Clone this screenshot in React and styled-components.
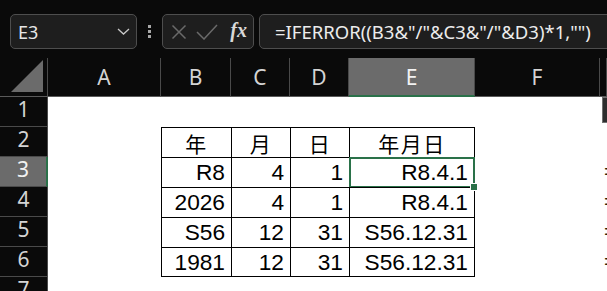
import React from "react";
import styled, { createGlobalStyle } from "styled-components";

const GREEN = "#2a7149";

const Global = createGlobalStyle`
  html, body { margin: 0; padding: 0; background: #0a0a0a; }
  body { font-family: "Noto Sans", "Liberation Sans", sans-serif; }
`;

const cols = ["A", "B", "C", "D", "E", "F", ""];

// table B2:E6, column G shows the clipped "=" of its formulas
const data = {
  2: ["年", "月", "日", "年月日"],
  3: ["R8", "4", "1", "R8.4.1"],
  4: ["2026", "4", "1", "R8.4.1"],
  5: ["S56", "12", "31", "S56.12.31"],
  6: ["1981", "12", "31", "S56.12.31"],
};

function App() {
  const rows = [1, 2, 3, 4, 5, 6, 7];
  return (
    <Screen>
      <Global />
      <Toolbar>
        <NameBox>
          <span>E3</span>
          <svg width="13" height="7" viewBox="0 0 13 7">
            <polyline points="1,1 6.5,6 12,1" fill="none" stroke="#c8c8c8" strokeWidth="1.3" />
          </svg>
        </NameBox>
        <Grip>
          <i />
          <i />
          <i />
        </Grip>
        <FxBox>
          <svg width="16" height="16" viewBox="0 0 16 16">
            <path d="M1.5 1.5 L14.5 14.5 M14.5 1.5 L1.5 14.5" stroke="#6a6a6a" strokeWidth="1.5" />
          </svg>
          <svg width="22" height="16" viewBox="0 0 22 16">
            <polyline points="1,8 8,15 21,1" fill="none" stroke="#6a6a6a" strokeWidth="1.5" />
          </svg>
          <Fx>fx</Fx>
        </FxBox>
        <FormulaBox>=IFERROR((B3&amp;"/"&amp;C3&amp;"/"&amp;D3)*1,"")</FormulaBox>
      </Toolbar>

      <Sheet>
        <Corner>
          <svg width="33" height="33" viewBox="0 0 33 33">
            <polygon points="0,32 32,0 32,32" fill="#6b6b6b" />
          </svg>
        </Corner>
        {cols.map((c, i) => (
          <ColHead key={"h" + i} $active={c === "E"}>
            {c}
          </ColHead>
        ))}
        {rows.map((r) => (
          <React.Fragment key={r}>
            <RowHead $active={r === 3}>{r}</RowHead>
            <Cell />
            {[0, 1, 2, 3].map((ci) => {
              const v = data[r] ? data[r][ci] : null;
              if (!v) return <Cell key={ci} />;
              return (
                <Cell
                  key={ci}
                  $boxed
                  $head={r === 2}
                  $last={ci === 3}
                  $bottom={r === 6}
                  $selected={r === 3 && ci === 3}
                >
                  {v}
                </Cell>
              );
            })}
            <Cell />
            <Edge>
              {r === 1 && (
                <FloatBtn>
                  <svg width="8" height="8" viewBox="0 0 8 8">
                    <path d="M1 3 L4 1 L7 3 L6 7 L2 7 Z" fill="#c9a23a" />
                  </svg>
                </FloatBtn>
              )}
              {r >= 3 && r <= 6 ? "=" : ""}
            </Edge>
          </React.Fragment>
        ))}
      </Sheet>
    </Screen>
  );
}

const Screen = styled.div`
  width: 607px;
  height: 291px;
  overflow: hidden;
  background: #0a0a0a;
`;

const Toolbar = styled.div`
  height: 58px;
  box-sizing: border-box;
  padding: 14px 0 0 10px;
  display: flex;
  align-items: flex-start;
`;

const BoxBase = styled.div`
  height: 35px;
  box-sizing: border-box;
  border: 1px solid #4e4e4e;
  border-radius: 5px;
  background: #1e1e1e;
  display: flex;
  align-items: center;
`;

const NameBox = styled(BoxBase)`
  width: 127px;
  padding: 0 6px 0 7px;
  justify-content: space-between;
  color: #e6e6e6;
  font-size: 18px;
  span {
    margin-top: 1px;
  }
`;

const Grip = styled.div`
  width: 25px;
  height: 35px;
  display: flex;
  flex-direction: column;
  align-items: center;
  justify-content: center;
  gap: 2px;
  i {
    width: 3px;
    height: 3px;
    background: #a8a8a8;
  }
`;

const FxBox = styled(BoxBase)`
  width: 92px;
  padding: 0 6px 0 8px;
  justify-content: space-between;
  svg:nth-child(2) {
    margin-left: -4px;
  }
`;

const Fx = styled.span`
  font-family: "Liberation Serif", serif;
  font-style: italic;
  font-weight: bold;
  font-size: 20px;
  color: #d8d8d8;
  margin-top: -2px;
`;

const FormulaBox = styled(BoxBase)`
  flex: 1;
  margin-left: 5px;
  margin-right: -12px;
  padding-left: 15px;
  color: #ececec;
  font-size: 18.5px;
  white-space: nowrap;
`;

const Sheet = styled.div`
  display: grid;
  grid-template-columns: 48px 113px 70px 59px 59px 126px 125px 7px;
  grid-template-rows: 39px repeat(7, 30px);
  background: #ffffff;
`;

const Corner = styled.div`
  background: #0a0a0a;
  border-right: 1px solid #4a4a4a;
  border-bottom: 1px solid #5a5a5a;
  display: flex;
  align-items: flex-end;
  justify-content: flex-end;
  padding: 0 3px 3px 0;
  box-sizing: border-box;
`;

const ColHead = styled.div`
  background: ${(p) => (p.$active ? "#6b6b6b" : "#0a0a0a")};
  color: ${(p) => (p.$active ? "#f2f2f2" : "#d4d4d4")};
  border-right: 1px solid #4a4a4a;
  border-bottom: ${(p) => (p.$active ? `2px solid ${GREEN}` : "1px solid #5a5a5a")};
  box-sizing: border-box;
  display: flex;
  align-items: center;
  justify-content: center;
  font-size: 21px;
  padding-top: ${(p) => (p.$active ? "1px" : "0")};
`;

const RowHead = styled.div`
  background: ${(p) => (p.$active ? "#6b6b6b" : "#0a0a0a")};
  color: ${(p) => (p.$active ? "#f2f2f2" : "#d4d4d4")};
  border-right: ${(p) => (p.$active ? `2px solid ${GREEN}` : "1px solid #4a4a4a")};
  border-bottom: 1px solid #4a4a4a;
  box-sizing: border-box;
  display: flex;
  align-items: center;
  justify-content: center;
  padding-bottom: 6px;
  font-size: 21px;
`;

const Cell = styled.div`
  position: relative;
  box-sizing: border-box;
  display: flex;
  align-items: center;
  justify-content: ${(p) => (p.$head ? "center" : "flex-end")};
  padding: 0 6px;
  color: #000;
  white-space: nowrap;
  font-family: ${(p) =>
    p.$head
      ? `"Noto Sans CJK JP", sans-serif`
      : `"Liberation Sans", "Noto Sans CJK JP", sans-serif`};
  font-size: ${(p) => (p.$head ? "21px" : "22.7px")};
  letter-spacing: ${(p) => (p.$head ? "1.5px" : "0")};
  ${(p) =>
    p.$boxed &&
    `
    border-left: 1px solid #000;
    border-top: 1px solid #000;
  `}
  ${(p) => p.$last && "border-right: 1px solid #000;"}
  ${(p) => p.$bottom && "border-bottom: 1px solid #000;"}
  ${(p) =>
    p.$selected &&
    `
    &::after {
      content: "";
      position: absolute;
      left: -1px;
      top: -1px;
      right: -1px;
      bottom: -1px;
      border: 2px solid ${GREEN};
    }
    &::before {
      content: "";
      position: absolute;
      right: -4px;
      bottom: -4px;
      width: 6px;
      height: 6px;
      background: ${GREEN};
      border: 1px solid #fff;
      z-index: 1;
    }
  `}
`;

const Edge = styled.div`
  position: relative;
  overflow: hidden;
  border-left: 1px solid #4a4a4a;
  border-left-color: transparent;
  display: flex;
  align-items: center;
  padding-left: 3px;
  font-family: "Liberation Sans", sans-serif;
  font-size: 22px;
  color: #2a2000;
  overflow: visible;
`;

const FloatBtn = styled.div`
  position: absolute;
  left: 1px;
  top: 0;
  width: 22px;
  height: 26px;
  box-sizing: border-box;
  background: #2e2e2e;
  border: 1px solid #707070;
  display: flex;
  align-items: center;
  padding-left: 3px;
`;

export default App;
